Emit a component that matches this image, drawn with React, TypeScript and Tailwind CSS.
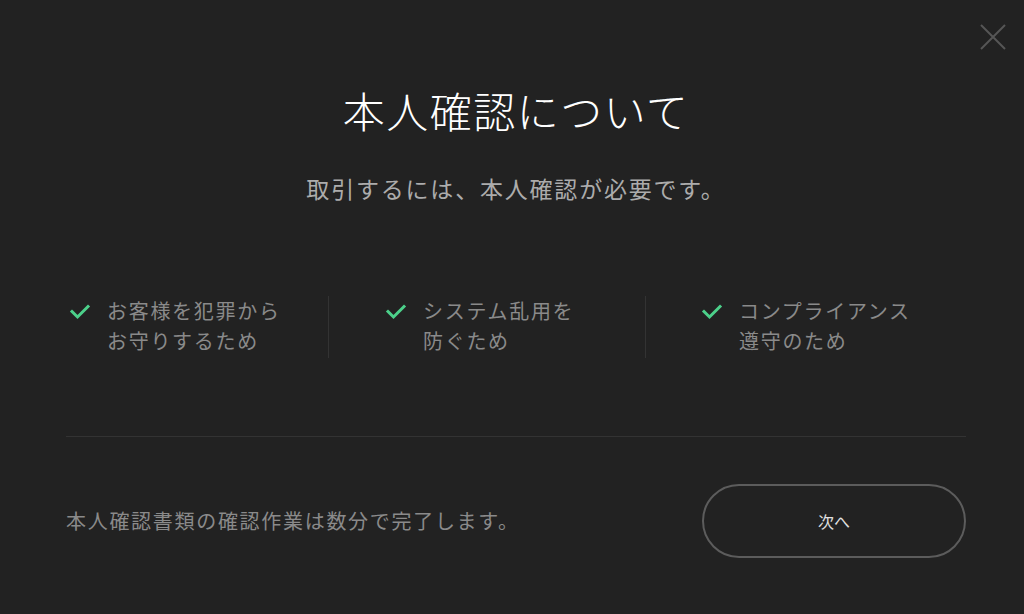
import React from "react";

const Check = () => (
  <svg width="24" height="20" viewBox="0 0 24 20" className="shrink-0 mt-[5px] ml-[2px]">
    <polyline points="4,10.5 9.5,16 20,5.5" fill="none" stroke="#4cd08a" strokeWidth="3" strokeLinecap="square" />
  </svg>
);

const Item = ({ lines }: { lines: string[] }) => (
  <div className="flex items-start">
    <Check />
    <div className="ml-[15px] text-[20px] leading-[30px] tracking-[1.7px] text-[#8a8a8a]">
      {lines.map((l) => (
        <div key={l}>{l}</div>
      ))}
    </div>
  </div>
);

export default function App() {
  return (
    <div
      className="relative w-[1024px] h-[614px] bg-[#222222] overflow-hidden"
      style={{ fontFamily: '"Noto Sans CJK JP", "Noto Sans", sans-serif' }}
    >
      <button className="absolute top-[24px] right-[18px] w-[26px] h-[26px]">
        <svg width="26" height="26" viewBox="0 0 26 26">
          <path d="M1 1 L25 25 M25 1 L1 25" stroke="#565656" strokeWidth="2" />
        </svg>
      </button>

      <div className="flex flex-col pl-[66px] pr-[58px] pt-[80px]">
        <h1 className="text-center text-white text-[42px] leading-[60px] tracking-[1.5px] font-light">
          本人確認について
        </h1>
        <p className="mt-[30px] text-center text-[#acacac] text-[23px] leading-[36px] tracking-[1.8px]">
          取引するには、本人確認が必要です。
        </p>

        <div className="mt-[90px] flex h-[62px]">
          <div className="w-[262px]">
            <Item lines={["お客様を犯罪から", "お守りするため"]} />
          </div>
          <div className="w-[317px] border-l border-[#333333] pl-[53px]">
            <Item lines={["システム乱用を", "防ぐため"]} />
          </div>
          <div className="flex-1 border-l border-[#333333] pl-[52px]">
            <Item lines={["コンプライアンス", "遵守のため"]} />
          </div>
        </div>

        <div className="mt-[78px] h-px bg-[#333333]" />

        <div className="mt-[47px] flex items-center justify-between">
          <p className="text-[20px] tracking-[1.7px] text-[#8a8a8a] leading-[30px]">
            本人確認書類の確認作業は数分で完了します。
          </p>
          <button className="w-[264px] h-[74px] rounded-full border-2 border-[#5c5c5c] text-[#e0e0e0] text-[16px] flex items-center justify-center">
            次へ
          </button>
        </div>
      </div>
    </div>
  );
}
